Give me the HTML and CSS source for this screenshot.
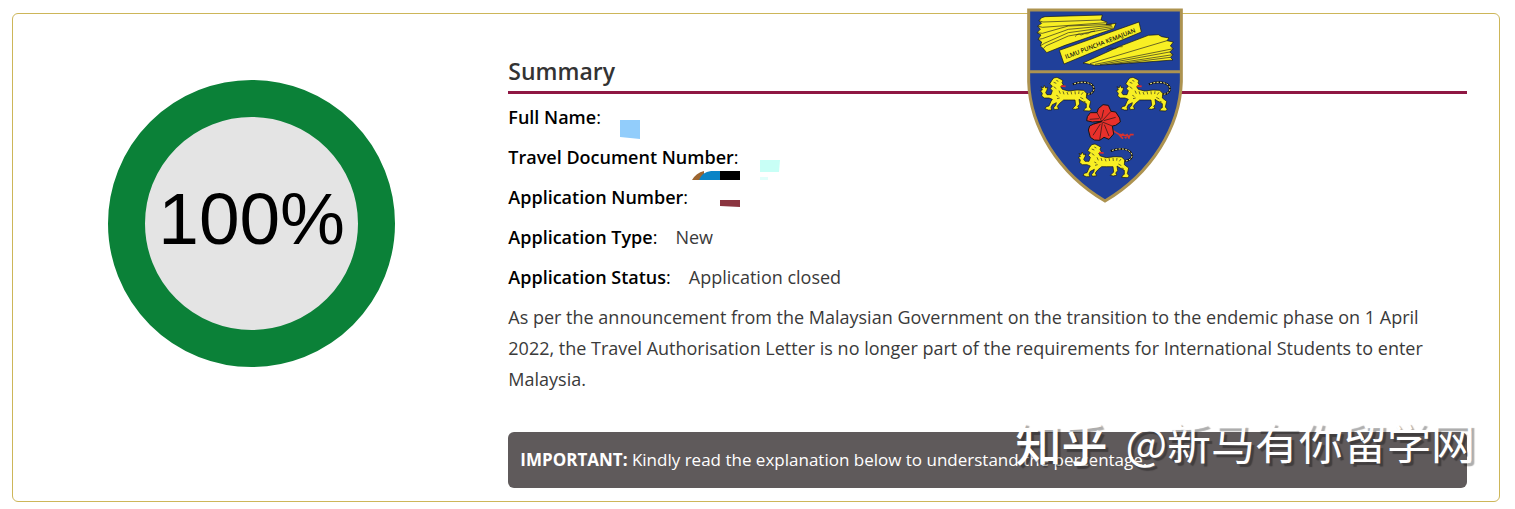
FILE: index.html
```html
<!DOCTYPE html>
<html lang="en">
<head>
<meta charset="utf-8">
<title>Application Summary</title>
<link rel="stylesheet" href="styles.css">
</head>
<body>
<main class="card">
  <section class="progress" aria-label="Progress">
    <div class="ring">100%</div>
  </section>
  <section class="summary">
    <h1 class="title">Summary</h1>
    <dl class="fields">
      <div class="field"><dt>Full Name</dt><dd></dd></div>
      <div class="field"><dt>Travel Document Number</dt><dd></dd></div>
      <div class="field"><dt>Application Number</dt><dd></dd></div>
      <div class="field"><dt>Application Type</dt><dd>New</dd></div>
      <div class="field"><dt>Application Status</dt><dd>Application closed</dd></div>
    </dl>
    <svg class="redactions" viewBox="0 0 160 90" aria-hidden="true">
      <path fill="#92cdfb" d="M0 0h20v19l-20-2z"/>
      <path fill="#9c6530" d="M72 60q4-7 12-9v9z"/>
      <path fill="#0a84c6" d="M79 60q3-8 12-9h9v9z"/>
      <path fill="#000" d="M100 51h20v9h-20z"/>
      <path fill="#c8fff6" d="M140 40h20l-1 12h-19z"/>
      <path fill="#e2fffb" d="M140 57h8v3h-8z"/>
      <path fill="#8b3540" d="M100 80h20v7l-20-1z"/>
    </svg>
    <p class="note">As per the announcement from the Malaysian Government on the transition to the endemic phase on 1 April 2022, the Travel Authorisation Letter is no longer part of the requirements for International Students to enter Malaysia.</p>
    <p class="alert"><strong>IMPORTANT:</strong> Kindly read the explanation below to understand the percentage.</p>
  </section>
  <svg class="crest" viewBox="36 24 468 588" role="img" aria-label="University crest">
    <defs>
      <g id="lion">
        <path fill="none" stroke="#111" stroke-width="6" d="M146 60C166 64 178 52 174 40C168 24 138 20 111 31"/>
        <path fill="none" stroke="#f5ee8e" stroke-width="3" stroke-dasharray="6 4" d="M146 60C166 64 178 52 174 40C168 24 138 20 111 31"/>
        <path fill="#f8ef24" stroke="#111" stroke-width="2" d="M48 20L54 12L64 10L74 15L82 20L79 26L83 33L75 38L80 46L98 51L124 48L144 49L153 58L152 72L165 82L161 99L167 106L161 111L144 110L148 103L152 101L152 89L136 80L130 76L132 90L126 97L130 103L119 106L110 104L120 94L118 78L98 78L84 78L72 88L65 97L69 105L56 107L54 101L60 94L62 86L50 92L46 100L48 108L38 108L28 104L32 98L40 96L46 82L50 76L40 72L26 72L18 66L20 58L14 50L20 48L16 38L22 42L26 34L30 42L36 40L34 48L30 56L34 62L46 62L50 50L44 44L50 36L42 30Z"/>
        <path stroke="#222" stroke-width="2" fill="none" d="M62 19l6 3M54 25l8 3M54 38l8 6M70 50l4 9M82 52l3 9M94 54l3 8M106 52l2 9M118 52l1 9M130 52l-1 8M142 55l-5 7M62 64l6 3M64 74l8-2M134 70l9 5M144 82l6 2"/>
        <path stroke="#e62a2a" stroke-width="5" d="M76 36l14 1"/>
      </g>
    </defs>
    <path fill="#20409a" stroke="#ad9350" stroke-width="9" d="M41 30H499V245C495 380 410 520 270 603C130 520 45 380 41 245Z"/>
    <path stroke="#ad9350" stroke-width="9" d="M41 215H499"/>
    <g fill="#f8ef24" stroke="#111" stroke-width="2">
      <path d="M80 53L90 50L262 45L258 60L276 66L274 74L303 70L296 86L150 136L95 158L85 146L76 138L80 126L69 118L78 105L66 98L76 88L68 78L80 70L72 62Z"/>
      <path d="M204 189L314 139L400 106L430 104L440 110L462 114L456 122L475 126L466 138L475 146L464 156L474 164L466 172L474 180L340 190L240 196Z"/>
    </g>
    <g fill="none" stroke="#222" stroke-width="2">
      <path d="M72 62L84 66L258 60M68 78L82 82L274 68M66 98L82 100L160 78L290 73M69 118L82 116L160 88L290 76M76 138L88 130L160 98L292 80M85 146L92 138L160 108L294 84"/>
      <path d="M225 191L456 122M240 193L475 146M255 194L464 156M275 194L474 164M300 193L466 172M180 110q10-12 18-5q12-6 20-4q10-8 22-8M275 150q12-10 24-4q12-8 24-6"/>
    </g>
    <path fill="#f8ef24" stroke="#111" stroke-width="2" d="M133 151L372 66L379 96L147 192Z"/>
    <text class="motto" transform="translate(153 177) rotate(-21)">ILMU PUNCHA KEMAJUAN</text>
    <use href="#lion" x="62" y="222"/>
    <use href="#lion" x="290" y="222"/>
    <use href="#lion" x="176" y="422"/>
    <path fill="none" stroke="#d8322f" stroke-width="5" d="M278 378q20 18 34 25l34 6M312 404l12 12M322 401l12 14M335 402l8 14M344 404l12 0"/>
    <path fill="#e8302b" stroke="#151515" stroke-width="3" d="M260 364L232 366L215 362L217 350L226 338L246 338L250 326L264 314L280 316L288 334L302 336L314 354L316 366L302 376L292 378L296 402L282 418L267 412L254 421L238 420L226 412L220 390L224 378L236 372Z"/>
    <path fill="none" stroke="#151515" stroke-width="2" d="M260 364L246 338M260 364L288 334M262 366L292 378M260 366L236 372M262 368L254 420M260 356l6-26M266 362l36-10M256 372l-22 34M268 374l14 34M252 356l-28 2"/>
  </svg>
  <div class="watermark"><b>知乎</b><span>@新马有你留学网</span></div>
</main>
</body>
</html>
```
FILE: styles.css
```css
* { box-sizing: border-box; }
body {
  margin: 0;
  background: #fff;
  color: #3a3a3a;
  font-family: "Open Sans", "Noto Sans", sans-serif;
  font-size: 18px;
}
.card {
  position: relative;
  display: grid;
  grid-template-columns: 1fr 2fr;
  margin: 13px 15px 7px 12px;
  border: 1px solid #cdb659;
  border-radius: 6px;
}
.progress {
  display: flex;
  justify-content: center;
  align-items: flex-start;
  padding: 66px 18px 0 0;
}
.ring {
  display: flex;
  justify-content: center;
  align-items: center;
  width: 287px;
  height: 287px;
  padding-bottom: 10px;
  border: 37px solid #0b8138;
  border-radius: 50%;
  background: #e4e4e4;
  color: #000;
  font: 73px "Liberation Sans", sans-serif;
}
.summary {
  position: relative;
  padding: 40px 32px 13px 0;
}
.title {
  margin: 0;
  padding-bottom: 3px;
  border-bottom: 3px solid #8f1743;
  color: #333;
  font-size: 23px;
  font-weight: 600;
  line-height: 34px;
}
.fields { margin: 3px 0 0; }
.field {
  display: flex;
  gap: 18px;
  line-height: 40px;
}
.field dt { color: #000; font-weight: 600; }
.field dt::after { content: ":"; font-weight: 400; }
.field dd { margin: 0; }
.redactions {
  position: absolute;
  left: 112px;
  top: 106px;
  width: 160px;
  height: 90px;
}
.note {
  margin: 5px 0 37px;
  line-height: 31px;
}
.alert {
  margin: 0;
  padding: 14px 12px;
  border-radius: 6px;
  background: #5f5a5b;
  color: #fff;
  font-size: 17px;
  line-height: 28px;
}
.crest {
  position: absolute;
  right: 316px;
  top: -6px;
  width: 156px;
  height: 196px;
}
.motto {
  fill: #111;
  font: 600 18px "Open Sans", sans-serif;
}
.watermark {
  position: absolute;
  right: 24px;
  bottom: 28px;
  display: flex;
  align-items: center;
  gap: 18px;
  color: #fff;
  font: 44px/64px "Noto Sans CJK SC", sans-serif;
  text-shadow: 3px 3px 1px rgba(0, 0, 0, 0.32);
}
.watermark b {
  font-size: 46px;
  font-weight: 500;
}
```
